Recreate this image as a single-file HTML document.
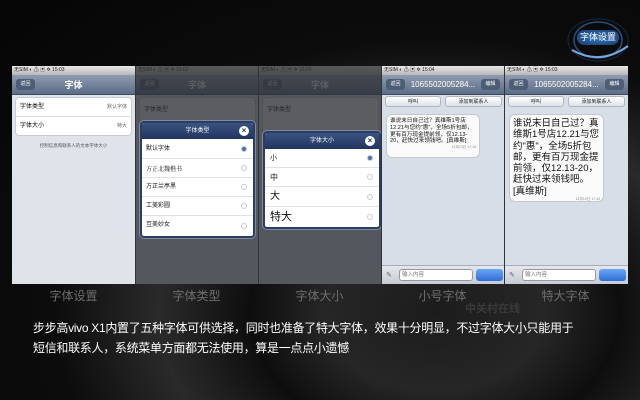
<!DOCTYPE html>
<html><head><meta charset="utf-8">
<style>
*{margin:0;padding:0;box-sizing:border-box}
body{width:640px;height:400px;overflow:hidden;background:#0a0a0a;position:relative;font-family:"Liberation Sans","Noto Sans CJK SC",sans-serif}
.bg{position:absolute;inset:0;background:radial-gradient(ellipse at 68% 78%,#1c1c1c 0,#262626 18%,#0e0e0e 30%,#2a2a2a 45%,#0c0c0c 62%,#050505 100%)}
.a{position:absolute}
.panel{position:absolute;top:66px;height:218px;overflow:hidden}
.sb{position:absolute;left:0;right:0;top:0;height:9px;background:linear-gradient(#e8e8e8,#b8b8b8);font-size:5px;color:#222;line-height:9px;padding-left:2px}
.nav{position:absolute;left:0;right:0;top:9px;height:20px;background:linear-gradient(#8e9bb0,#5d6d86);border-bottom:1px solid #3e4a5e}
.back{position:absolute;left:4px;top:4px;width:19px;height:11px;background:#4d5d76;border-radius:3px;font-size:5px;color:#fff;text-align:center;line-height:11px}
.ttl{position:absolute;left:0;right:0;top:0;text-align:center;color:#fff;font-size:9px;line-height:20px;font-weight:bold}
.dim{position:absolute;left:0;right:0;top:0;bottom:0;background:rgba(45,47,52,.78)}
.cap{position:absolute;top:287px;color:#6e6e6e;font-size:12px;text-align:center;width:123px}
.dlg{position:absolute;background:#fff;border:2px solid #2b3e62;border-radius:4px;overflow:hidden;box-shadow:0 0 0 1px #7c8aa3}
.dh{height:16px;background:linear-gradient(#3b5380,#203660);color:#fff;font-size:6px;text-align:center;line-height:16px;position:relative}
.x{position:absolute;right:4px;top:3px;width:10px;height:10px;border-radius:50%;background:#fff;color:#203660;font-size:8px;line-height:10px;text-align:center;font-weight:bold}
.row{border-bottom:1px solid #e2e2e2;position:relative;color:#111}
.rad{position:absolute;right:6px;top:50%;margin-top:-3px;width:6px;height:6px;border-radius:50%;border:1px solid #ccc}
.btn{position:absolute;top:30px;height:11px;background:linear-gradient(#fff,#dde2ea);border:1px solid #aeb6c2;border-radius:3px;font-size:5px;text-align:center;line-height:10px;color:#222}
.bub{position:absolute;background:#fafafa;border:1px solid #c4c9d0;border-radius:6px;color:#111}
.inb{position:absolute;left:0;right:0;top:199px;height:19px;background:linear-gradient(#e4e7ec,#c6ccd5);border-top:1px solid #aab}
</style></head><body>
<div class="bg"></div>
<svg class="a" style="left:560px;top:18px" width="80" height="45"><ellipse cx="38" cy="22" rx="24" ry="18" fill="none" stroke="#2e5f96" stroke-width="1.5" opacity=".8"/><ellipse cx="38" cy="22" rx="30" ry="21" fill="none" stroke="#1d3e66" stroke-width="1" opacity=".6"/><path d="M12 32 Q40 48 68 28" stroke="#7aa8dd" stroke-width="2" fill="none"/></svg>
<div class="a" style="left:577px;top:30px;width:42px;height:15px;border-radius:7px;background:radial-gradient(#3c7ac0,#143a6a);color:#fff;font-size:9px;line-height:15px;text-align:center">字体设置</div>

<div class="panel" style="left:12px;width:123px;background:#dfe4ea">
 <div class="sb">无SIM ◐ ⚠ ▣ ✲ 15:03</div>
 <div class="nav"><div class="back">返回</div><div class="ttl">字体</div></div>
 <div class="a" style="left:3px;top:31px;width:117px;height:39px;background:#fff;border:1px solid #c9ced6;border-radius:4px">
  <div style="height:19px;border-bottom:1px solid #ddd;font-size:6px;line-height:19px;padding-left:4px;position:relative">字体类型<span style="position:absolute;right:4px;font-size:5px;color:#666">默认字体</span></div>
  <div style="height:19px;font-size:6px;line-height:19px;padding-left:4px;position:relative">字体大小<span style="position:absolute;right:4px;font-size:5px;color:#666">特大</span></div>
 </div>
 <div class="a" style="left:0;width:123px;top:77px;text-align:center;font-size:4.5px;color:#555">控制信息和联系人的文本字体大小</div>
</div>
<div class="panel" style="left:135px;width:123px;background:#dfe4ea;border-left:1px solid #333">
 <div class="sb">无SIM ◐ ⚠ ▣ ✲ 15:02</div>
 <div class="nav"><div class="back">返回</div><div class="ttl">字体</div></div>
 <div class="a" style="left:3px;top:31px;width:117px;height:39px;background:#fff;border:1px solid #c9ced6;border-radius:4px;font-size:6px;padding:6px 4px">字体类型</div>
 <div class="dim"></div>
 <div class="dlg" style="left:4px;top:55px;width:115px;height:117px">
  <div class="dh">字体类型<div class="x">×</div></div>
  <div class="row" style="height:20px;font-size:6px;line-height:20px;padding-left:4px">默认字体<div class="rad" style="background:#4a70b0;border-color:#bcd"></div></div>
  <div class="row" style="height:19px;font-size:6px;line-height:19px;padding-left:4px;font-family:'Noto Serif CJK SC',serif">方正北魏楷书<div class="rad"></div></div>
  <div class="row" style="height:19px;font-size:6px;line-height:19px;padding-left:4px">方正兰亭黑<div class="rad"></div></div>
  <div class="row" style="height:19px;font-size:6px;line-height:19px;padding-left:4px">工美彩圆<div class="rad"></div></div>
  <div class="row" style="height:19px;font-size:6px;line-height:19px;padding-left:4px;border:0">互美妙女<div class="rad"></div></div>
 </div>
</div>
<div class="panel" style="left:258px;width:123px;background:#dfe4ea;border-left:1px solid #333">
 <div class="sb">无SIM ◐ ⚠ ▣ ✲ 15:03</div>
 <div class="nav"><div class="back">返回</div><div class="ttl">字体</div></div>
 <div class="a" style="left:3px;top:31px;width:117px;height:39px;background:#fff;border:1px solid #c9ced6;border-radius:4px;font-size:6px;padding:6px 4px">字体类型</div>
 <div class="dim"></div>
 <div class="dlg" style="left:4px;top:65px;width:118px;height:98px">
  <div class="dh">字体大小<div class="x">×</div></div>
  <div class="row" style="height:19px;font-size:7px;line-height:19px;padding-left:5px">小<div class="rad" style="background:#4a70b0;border-color:#bcd"></div></div>
  <div class="row" style="height:19px;font-size:8px;line-height:19px;padding-left:5px">中<div class="rad"></div></div>
  <div class="row" style="height:20px;font-size:10px;line-height:20px;padding-left:5px">大<div class="rad"></div></div>
  <div class="row" style="height:20px;font-size:11px;line-height:20px;padding-left:5px;border:0">特大<div class="rad"></div></div>
 </div>
</div>
<div class="panel" style="left:381px;width:123px;background:#d8dee7;border-left:1px solid #333">
 <div class="sb">无SIM ◐ ⚠ ▣ ✲ 15:04</div>
 <div class="nav"><div class="back">返回</div><div class="ttl" style="left:22px;right:22px;font-size:8px;font-weight:normal">1065502005284...</div><div class="back" style="left:auto;right:4px">编辑</div></div>
 <div class="btn" style="left:3px;width:56px">呼叫</div>
 <div class="btn" style="left:63px;width:57px">添加到联系人</div>
 <div class="bub" style="left:4px;top:48px;width:94px;height:44px;font-size:5.6px;line-height:6.8px;padding:3px 3px">谁说末日自己过？真维斯1号店12.21与您约"惠"，全场5折包邮，更有百万现金提前领，仅12.13-20，赶快过来领钱吧。[真维斯]<div style="text-align:right;font-size:3.5px;line-height:5px;color:#888">12月13日 17:10</div></div>
 <div class="inb"><div class="a" style="left:17px;top:3px;width:74px;height:12px;background:#fff;border:1px solid #999;border-radius:3px;font-size:5.5px;line-height:11px;padding-left:2px;color:#777">输入内容</div><div class="a" style="left:94px;top:3px;width:27px;height:12px;background:linear-gradient(#6aa6f4,#2f6fd6);border-radius:3px"></div><div class="a" style="left:4px;top:5px;font-size:7px;color:#666">✎</div></div>
</div>
<div class="panel" style="left:504px;width:124px;background:#d8dee7;border-left:1px solid #333">
 <div class="sb">无SIM ◐ ⚠ ▣ ✲ 15:03</div>
 <div class="nav"><div class="back">返回</div><div class="ttl" style="left:22px;right:22px;font-size:8px;font-weight:normal">1065502005284...</div><div class="back" style="left:auto;right:4px">编辑</div></div>
 <div class="btn" style="left:3px;width:56px">呼叫</div>
 <div class="btn" style="left:63px;width:57px">添加到联系人</div>
 <div class="bub" style="left:4px;top:48px;width:95px;height:88px;font-size:9.5px;line-height:11.3px;padding:3px 3px">谁说末日自己过？真维斯1号店12.21与您约"惠"，全场5折包邮，更有百万现金提前领，仅12.13-20，赶快过来领钱吧。[真维斯]<div style="text-align:right;font-size:3.5px;line-height:5px;color:#888">12月13日 17:10</div></div>
 <div class="inb"><div class="a" style="left:17px;top:3px;width:74px;height:12px;background:#fff;border:1px solid #999;border-radius:3px;font-size:5.5px;line-height:11px;padding-left:2px;color:#777">输入内容</div><div class="a" style="left:94px;top:3px;width:27px;height:12px;background:linear-gradient(#6aa6f4,#2f6fd6);border-radius:3px"></div><div class="a" style="left:4px;top:5px;font-size:7px;color:#666">✎</div></div>
</div>

<div class="cap" style="left:12px">字体设置</div>
<div class="cap" style="left:135px">字体类型</div>
<div class="cap" style="left:258px">字体大小</div>
<div class="cap" style="left:381px">小号字体</div>
<div class="cap" style="left:504px">特大字体</div>
<div class="a" style="left:465px;top:300px;color:#3a3a3a;font-size:11px;font-weight:bold">中关村在线</div>

<div class="a" style="left:33px;top:318px;width:600px;color:#fff;font-size:12px;line-height:20px;letter-spacing:-0.3px">步步高vivo X1内置了五种字体可供选择，同时也准备了特大字体，效果十分明显，不过字体大小只能用于<br>短信和联系人，系统菜单方面都无法使用，算是一点点小遗憾</div>
</body></html>
